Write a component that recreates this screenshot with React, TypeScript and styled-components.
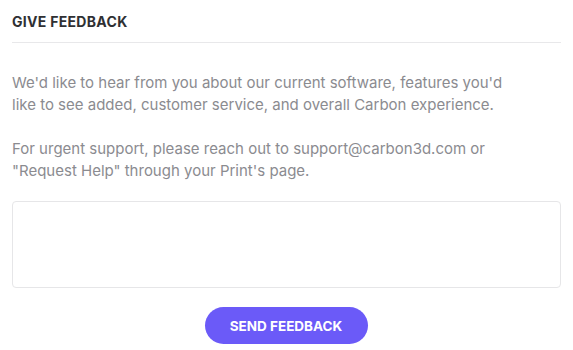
import React, { useState } from "react";
import styled, { createGlobalStyle } from "styled-components";

const GlobalStyle = createGlobalStyle`
  body {
    margin: 0;
    background: #fff;
    font-family: Inter, "Liberation Sans", sans-serif;
  }
`;

const Container = styled.div`
  width: 549px;
  padding: 0 12px;
  display: flex;
  flex-direction: column;
`;

const Title = styled.h3`
  margin: 0;
  padding: 13px 0 12px;
  font-size: 14px;
  font-weight: 700;
  letter-spacing: 0.3px;
  color: #2f3033;
  border-bottom: 1px solid #e8e8ea;
`;

const Text = styled.p`
  margin: 0;
  max-width: 492px;
  font-size: 15px;
  line-height: 22px;
  color: #8b8b90;
`;

const Body = styled.div`
  display: flex;
  flex-direction: column;
  gap: 22px;
  padding-top: 29px;
`;

const Input = styled.textarea`
  margin-top: 19px;
  height: 87px;
  box-sizing: border-box;
  border: 1px solid #e6e6e8;
  border-radius: 4px;
  resize: none;
  outline: none;
  padding: 8px;
  font-family: inherit;
  font-size: 15px;
`;

const Footer = styled.div`
  display: flex;
  justify-content: center;
  padding-top: 19px;
`;

const Button = styled.button`
  width: 163px;
  height: 37px;
  border: none;
  border-radius: 19px;
  background: #6b5af8;
  color: #fff;
  font-family: inherit;
  font-size: 13.5px;
  font-weight: 700;
  cursor: pointer;
  margin-left: -1px;
`;

const App = () => {
  const [feedback, setFeedback] = useState("");

  return (
    <>
      <GlobalStyle />
      <Container>
        <Title>GIVE FEEDBACK</Title>
        <Body>
          <Text>
            We'd like to hear from you about our current software, features
            you'd like to see added, customer service, and overall Carbon
            experience.
          </Text>
          <Text>
            For urgent support, please reach out to support@carbon3d.com or
            "Request Help" through your Print's page.
          </Text>
        </Body>
        <Input
          value={feedback}
          onChange={({ target }) => setFeedback(target.value)}
        />
        <Footer>
          <Button>SEND FEEDBACK</Button>
        </Footer>
      </Container>
    </>
  );
};

export default App;
